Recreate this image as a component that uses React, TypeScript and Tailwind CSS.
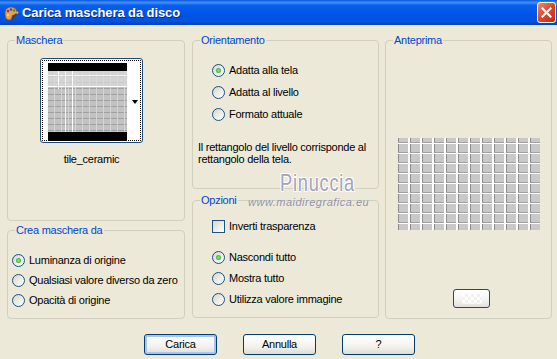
import React from "react";

const font = { fontFamily: '"Liberation Sans", Arial, sans-serif' };

function Radio({ checked }: { checked?: boolean }) {
  return (
    <span className="w-[13px] h-[13px] rounded-full border border-[#1C5180] bg-[linear-gradient(135deg,#D6D6CE,#FFFFFF)] flex items-center justify-center shrink-0">
      {checked && <span className="w-[5px] h-[5px] rounded-full bg-[radial-gradient(circle,#8CE88C,#1E9E1E)]" />}
    </span>
  );
}

function RadioRow({ label, checked, h = "h-[22px]" }: { label: string; checked?: boolean; h?: string }) {
  return (
    <div className={`flex items-center gap-[4px] ${h}`}>
      <Radio checked={checked} />
      <span className="whitespace-nowrap">{label}</span>
    </div>
  );
}

function Group({ title, className, children }: { title: string; className: string; children?: React.ReactNode }) {
  return (
    <fieldset className={`border border-[#D0D0BF] rounded-[4px] ${className}`}>
      <legend className="ml-[7px] px-[1px] text-[#0046D5] leading-[13px]">{title}</legend>
      {children}
    </fieldset>
  );
}

function XpButton({ label, def }: { label: string; def?: boolean }) {
  return (
    <div
      className={`w-[73px] h-[21px] rounded-[3px] border border-[#003C74] flex items-center justify-center bg-[linear-gradient(180deg,#FFFFFF,#F3F2EE_60%,#E0DCD2)] ${
        def ? "shadow-[inset_0_0_0_2px_#A8C4F0]" : ""
      }`}
    >
      {label}
    </div>
  );
}

function PaletteIcon() {
  return (
    <svg width="16" height="16" viewBox="0 0 16 16">
      <path d="M2 8c0-4 3-6 6-6s6 2 6 5-2 3-3 3-2 0-2 2-1 3-3 3c-3 0-4-3-4-7z" fill="#E8A050" stroke="#8A4A1A" strokeWidth="0.8" />
      <circle cx="5" cy="6" r="1.3" fill="#D02020" />
      <circle cx="8" cy="4.5" r="1.2" fill="#2050D0" />
      <circle cx="11" cy="5.5" r="1.2" fill="#20A040" />
      <circle cx="5" cy="10" r="1.2" fill="#F0E040" />
      <path d="M9 14 L14 8" stroke="#5A3A20" strokeWidth="1.6" />
      <path d="M13.5 8.5 L15 6.8" stroke="#C0C0C0" strokeWidth="1.8" />
    </svg>
  );
}

function Thumb() {
  return (
    <svg width="79" height="78" viewBox="0 0 79 78">
      <defs>
        <pattern id="tg" width="7" height="6" patternUnits="userSpaceOnUse" x="0" y="2">
          <rect width="7" height="6" fill="#C2C2C2" />
          <rect x="0" y="5" width="7" height="1" fill="#A0A0A0" />
          <rect x="6" y="0" width="1" height="6" fill="#D4D4D4" />
        </pattern>
      </defs>
      <rect width="79" height="78" fill="#C8C8C8" />
      <rect y="8" width="79" height="61" fill="url(#tg)" />
      <rect y="8" width="79" height="15" fill="#DADADA" opacity="0.7" />
      <rect x="10" y="8" width="1" height="18" fill="#FFFFFF" />
      <rect x="17" y="8" width="1" height="61" fill="#F4F4F4" />
      <rect x="24" y="8" width="1" height="61" fill="#FFFFFF" />
      <rect y="12" width="79" height="1" fill="#F4F4F4" />
      <rect y="23" width="79" height="1" fill="#FFFFFF" />
      <rect y="0" width="79" height="8" fill="#000" />
      <rect y="69" width="79" height="9" fill="#000" />
    </svg>
  );
}

function PreviewGrid() {
  return (
    <svg width="142" height="92" viewBox="0 0 142 92">
      <defs>
        <pattern id="pg" width="12" height="10" patternUnits="userSpaceOnUse" x="-1" y="-4">
          <rect width="12" height="10" fill="#FFFFFF" />
          <rect x="1" y="0" width="10" height="9" fill="#C8C8C8" />
          <rect x="1" y="0" width="1" height="9" fill="#8C8C8C" />
          <rect x="1" y="8" width="10" height="1" fill="#A0A0A0" />
        </pattern>
      </defs>
      <rect width="142" height="92" fill="url(#pg)" />
    </svg>
  );
}

export default function App() {
  return (
    <div className="relative w-[557px] h-[359px] overflow-hidden bg-[#ECE9D8] text-[11px] tracking-[-0.25px] text-black" style={font}>
      {/* Title bar */}
      <div className="h-[25px] flex items-center bg-[linear-gradient(180deg,#0A5ADF_0%,#3C8EF6_10%,#0A5EF0_22%,#0055E6_55%,#0052E0_85%,#0040C0_100%)]">
        <div className="ml-[3px] w-[16px] h-[16px]">
          <PaletteIcon />
        </div>
        <span className="ml-[3px] text-white font-bold text-[13px] tracking-[-0.1px] [text-shadow:1px_1px_0_#0A2A8A]">Carica maschera da disco</span>
        <div className="ml-auto mr-[1px] w-[19px] h-[21px] rounded-[3px] border border-white bg-[linear-gradient(135deg,#F08A6A,#D8472A_50%,#B8301A)] flex items-center justify-center">
          <svg width="11" height="11" viewBox="0 0 11 11">
            <path d="M1.5 1.5 L9.5 9.5 M9.5 1.5 L1.5 9.5" stroke="#FFFFFF" strokeWidth="2.2" strokeLinecap="square" />
          </svg>
        </div>
      </div>

      {/* Body */}
      <div className="flex pl-[7px] pt-[9px]">
        {/* Left column */}
        <div className="w-[178px] flex flex-col gap-[3px]">
          <Group title="Maschera" className="h-[187px]">
            <div className="ml-[32px] mt-[11px] w-[103px] flex flex-col items-center">
              <div className="w-[103px] h-[85px] rounded-[3px] border border-[#1C4A7C] bg-white p-[1px]">
                <div className="w-full h-full border border-dotted border-black flex">
                  <div className="ml-[5px] mt-[2px]">
                    <Thumb />
                  </div>
                  <div className="flex-1 flex items-center justify-center">
                    <svg width="6" height="4" viewBox="0 0 6 4" className="mt-[2px] ml-[2px]">
                      <path d="M0 0 H6 L3 4 Z" fill="#000" />
                    </svg>
                  </div>
                </div>
              </div>
              <div className="mt-[10px] leading-[13px]">tile_ceramic</div>
            </div>
          </Group>
          <Group title="Crea maschera da" className="h-[95px]">
            <div className="ml-[4px] mt-[13px] flex flex-col">
              <RadioRow label="Luminanza di origine" checked h="h-[20px]" />
              <RadioRow label="Qualsiasi valore diverso da zero" h="h-[20px]" />
              <RadioRow label="Opacità di origine" h="h-[20px]" />
            </div>
          </Group>
        </div>

        {/* Middle column */}
        <div className="ml-[7px] w-[187px] flex flex-col gap-[5px]">
          <Group title="Orientamento" className="h-[155px]">
            <div className="ml-[19px] mt-[12px] flex flex-col">
              <RadioRow label="Adatta alla tela" checked />
              <RadioRow label="Adatta al livello" />
              <RadioRow label="Formato attuale" />
            </div>
            <div className="ml-[5px] mt-[16px] leading-[12px]">
              Il rettangolo del livello corrisponde al
              <br />
              rettangolo della tela.
            </div>
          </Group>
          <Group title="Opzioni" className="h-[124px]">
            <div className="ml-[19px] mt-[9px] flex flex-col">
              <div className="flex items-center gap-[4px] h-[20px]">
                <span className="w-[13px] h-[13px] border border-[#1C5180] bg-[linear-gradient(135deg,#D6D6CE,#FFFFFF)] shrink-0" />
                <span>Inverti trasparenza</span>
              </div>
              <div className="mt-[11px] flex flex-col">
                <RadioRow label="Nascondi tutto" checked h="h-[21px]" />
                <RadioRow label="Mostra tutto" h="h-[21px]" />
                <RadioRow label="Utilizza valore immagine" h="h-[21px]" />
              </div>
            </div>
          </Group>
        </div>

        {/* Right column */}
        <div className="ml-[6px] w-[167px]">
          <Group title="Anteprima" className="h-[285px]">
            <div className="ml-[12px] mt-[91px] w-[142px] h-[92px]">
              <PreviewGrid />
            </div>
            <div className="ml-[67px] mt-[59px] w-[37px] h-[19px] rounded-[3px] border border-[#1C4A7C] bg-[linear-gradient(180deg,#FFFFFF,#F2F2EE_60%,#E2E0D8)] flex items-center justify-center">
              <div className="w-[20px] h-[10px] bg-[repeating-conic-gradient(#F0F0F0_0%_25%,#FFFFFF_0%_50%)] bg-[length:6px_6px]" />
            </div>
          </Group>
        </div>
      </div>

      {/* Buttons */}
      <div className="flex gap-[26px] ml-[144px] mt-[15px]">
        <XpButton label="Carica" def />
        <XpButton label="Annulla" />
        <XpButton label="?" />
      </div>

      {/* Watermark overlay */}
      <div
        className="absolute left-[280px] top-[170px] text-[24px] leading-[26px] tracking-[1px] text-[#A2A2BA] origin-left scale-x-[0.76] [text-shadow:1px_1px_0_#FFFFFF,-1px_-1px_0_#FFFFFF,1px_-1px_0_#FFFFFF,-1px_1px_0_#FFFFFF]"
        style={{ fontFamily: '"Liberation Sans", Arial, sans-serif' }}
      >
        Pinuccia
      </div>
      <div
        className="absolute left-[248px] top-[196px] text-[11px] leading-[12px] italic tracking-[0.5px] text-[#8E8EA0] [text-shadow:0_0_1px_#FFFFFF]"
        style={{ fontFamily: '"Liberation Sans", Arial, sans-serif' }}
      >
        www.maidiregrafica.eu
      </div>
    </div>
  );
}
